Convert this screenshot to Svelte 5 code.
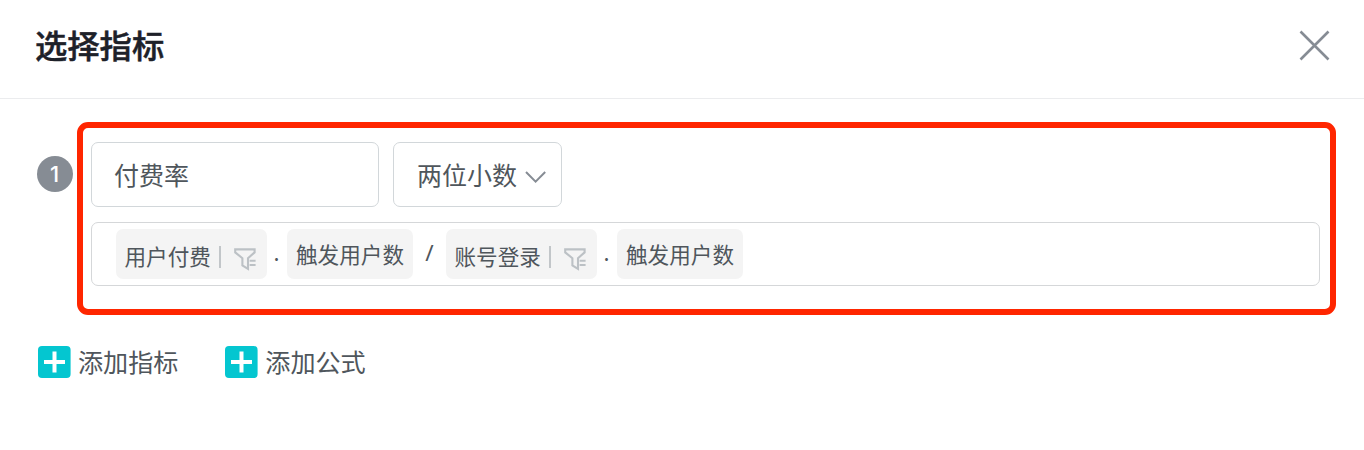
<script>
  const formula = [
    { event: '用户付费', measure: '触发用户数' },
    { event: '账号登录', measure: '触发用户数' }
  ];
  const actions = ['添加指标', '添加公式'];
</script>

<div class="dialog">
  <header>
    <h1>选择指标</h1>
    <svg class="close" width="32" height="32" viewBox="0 0 32 32" aria-hidden="true">
      <path d="M2.5 2.5L30.5 30.5M30.5 2.5L2.5 30.5" fill="none" stroke="#868c94" stroke-width="2.6" />
    </svg>
  </header>

  <main>
    <div class="metric">
      <span class="index">1</span>
      <section class="panel">
        <div class="fields">
          <div class="name"><span>付费率</span></div>
          <div class="format">
            <span>两位小数</span>
            <svg width="22" height="14" viewBox="0 0 22 14" aria-hidden="true">
              <path d="M1 2L10.6 11.6L20.2 2" fill="none" stroke="#868c94" stroke-width="2" />
            </svg>
          </div>
        </div>
        <div class="formula">
          {#each formula as term, i}
            {#if i > 0}<span class="divide">/</span>{/if}
            <div class="tag event">
              <span>{term.event}</span>
              <i class="bar"></i>
              <svg width="23" height="24" viewBox="0 0 23 24" aria-hidden="true">
                <path d="M1.2 2.4H20.6V5.4L14 11.2V21.8L8.4 18.4V11.2L1.2 5.4Z" fill="none" stroke="#bcc1c5" stroke-width="2.1" />
                <path d="M15.6 13.8H21.6M15.6 18H21.6" stroke="#bcc1c5" stroke-width="2" />
              </svg>
            </div>
            <span class="dot">.</span>
            <div class="tag measure">{term.measure}</div>
          {/each}
        </div>
      </section>
    </div>

    <div class="actions">
      {#each actions as label}
        <div class="action">
          <svg width="33" height="32" viewBox="0 0 33 32" aria-hidden="true">
            <rect width="32.6" height="32" rx="4" fill="#04c6d0" />
            <path d="M6 16H27M16.5 5.5V26.5" stroke="#fff" stroke-width="4" />
          </svg>
          <span>{label}</span>
        </div>
      {/each}
    </div>
  </main>
</div>

<style>
  :global(body) {
    margin: 0;
    background: #fff;
  }
  .dialog {
    height: 450px;
    overflow: hidden;
    box-sizing: border-box;
    font-family: 'Noto Sans CJK SC', sans-serif;
    font-size: 25px;
    color: #4f565c;
    background: #fff;
  }
  .dialog * {
    box-sizing: border-box;
  }
  header {
    display: flex;
    justify-content: space-between;
    height: 99px;
    padding: 29px 34px 0 35px;
    border-bottom: 1px solid #ebecee;
  }
  h1 {
    margin: 0;
    font-size: 32.3px;
    line-height: 30px;
    font-weight: 500;
    color: #1d2129;
    -webkit-text-stroke: 0.5px #1d2129;
  }
  .close {
    flex: none;
  }
  main {
    padding: 23px 28px 0 37px;
  }
  .metric {
    display: flex;
    gap: 4px;
  }
  .index {
    flex: none;
    width: 36px;
    height: 36px;
    margin-top: 34px;
    padding-right: 1px;
    border-radius: 50%;
    background: #868c94;
    color: #fff;
    font: 500 22px/36px Inter, sans-serif;
    text-align: center;
  }
  .panel {
    flex: 1;
    height: 193px;
    padding: 14px 10px 0 8px;
    border: 6px solid #ff2600;
    border-radius: 11px;
  }
  .fields {
    display: flex;
    gap: 14px;
    margin-bottom: 15px;
  }
  .name,
  .format {
    display: flex;
    align-items: center;
    height: 65px;
    padding: 0 22px 0 22px;
    border: 1px solid #d2d7da;
    border-radius: 7px;
    line-height: 36px;
    white-space: nowrap;
  }
  .name span,
  .format span {
    padding-bottom: 2px;
  }
  .name {
    width: 288px;
  }
  .format {
    width: 169px;
    gap: 8px;
    padding: 0 14px 0 23px;
  }
  .format svg {
    flex: none;
    margin-top: 5px;
  }
  .formula {
    display: flex;
    height: 64px;
    padding: 6px 24px;
    border: 1px solid #d5d7d9;
    border-radius: 7px;
    font-size: 21.6px;
    white-space: nowrap;
  }
  .tag {
    display: flex;
    align-items: center;
    height: 50px;
    border-radius: 7px;
    background: #f4f4f4;
  }
  .event {
    width: 151px;
    padding: 5px 0 0 8.5px;
  }
  .event span {
    padding-bottom: 2px;
  }
  .event svg {
    flex: none;
    margin: 4px 0 0 13px;
  }
  .bar {
    width: 2px;
    height: 22px;
    margin-left: 8px;
    background: #c2c6c9;
  }
  .measure {
    width: 126px;
    padding: 0 0 1px 9px;
  }
  .dot,
  .divide {
    text-align: center;
  }
  .dot {
    width: 20px;
    padding-right: 1px;
    line-height: 46px;
  }
  .divide {
    width: 33px;
    font: 22.5px/48px 'Noto Sans', sans-serif;
  }
  .actions {
    display: flex;
    gap: 46.9px;
    margin-top: 31px;
    padding-left: 1px;
  }
  .action {
    display: flex;
    gap: 7px;
    font-size: 25.1px;
    line-height: 30px;
  }
</style>
